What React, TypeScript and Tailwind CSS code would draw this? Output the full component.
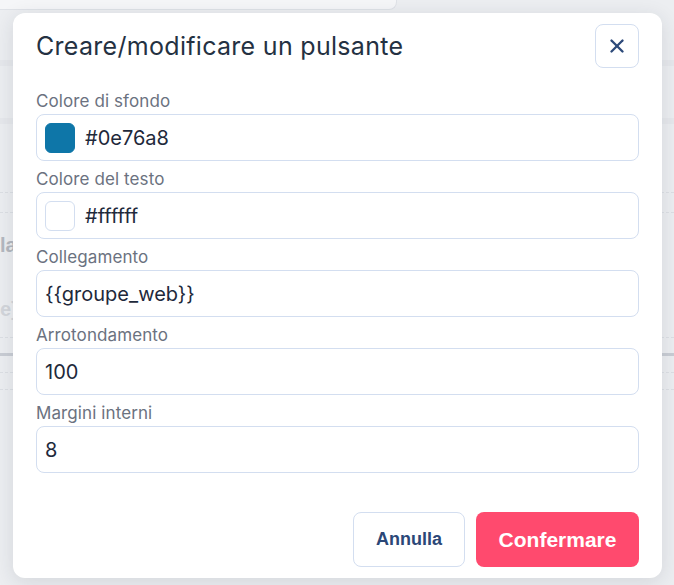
import { X } from "lucide-react";

const fields = [
  { label: "Colore di sfondo", value: "#0e76a8", swatch: "bg-[#0e76a8] border-[#0e76a8]" },
  { label: "Colore del testo", value: "#ffffff", swatch: "bg-white border-[#d3def0]" },
  { label: "Collegamento", value: "{{groupe_web}}" },
  { label: "Arrotondamento", value: "100" },
  { label: "Margini interni", value: "8" },
];

function Backdrop() {
  return (
    <div className="absolute inset-0 bg-[#eceef1]">
      {/* page behind the modal, faded out */}
      <div className="h-[10px] w-[397px] rounded-br-lg border-r border-b border-[#dfe2e7] bg-[#f5f6f8]" />
      <div className="mt-[50px] h-[6px] w-full bg-[#e6e8ec]" />
      <div className="mt-[52px] h-[6px] w-full bg-[#e6e8ec]" />
      <div className="mt-[68px] border-t border-dashed border-[#dcdfe4]" />
      <div className="mt-[19px] border-t border-dashed border-[#dcdfe4]" />
      <div className="mt-[22px] text-[20px] font-bold leading-[20px] text-[#b4b8bf] [font-family:'Liberation_Sans',sans-serif]">
        la
      </div>
      <div className="mt-[44px] text-[20px] font-bold leading-[20px] text-[#d3d6db] [font-family:'Liberation_Sans',sans-serif]">
        {"e}}"}
      </div>
      <div className="mt-[18px] border-t border-dashed border-[#dcdfe4]" />
      <div className="mt-[15px] h-[3px] w-full bg-[#c9cdd4]" />
      <div className="mt-[16px] border-t border-dashed border-[#dcdfe4]" />
      <div className="mt-[16px] border-t border-dashed border-[#dcdfe4]" />
    </div>
  );
}

export default function App() {
  return (
    <div className="relative h-[585px] w-[674px] overflow-hidden [font-family:Inter,'Noto_Sans',sans-serif]">
      <Backdrop />

      <div className="absolute left-[13px] top-[13px] flex h-[565px] w-[649px] flex-col rounded-xl bg-white px-[23px] pt-[11px] pb-[11px] shadow-[0_4px_20px_rgba(30,41,59,0.12)]">
        {/* header */}
        <div className="flex items-center justify-between">
          <h2 className="text-[25px] font-normal leading-[30px] tracking-[0.3px] text-[#243142]">
            Creare/modificare un pulsante
          </h2>
          <button className="flex h-[44px] w-[44px] items-center justify-center rounded-lg border border-[#d3def0] bg-white text-[#2d4a7a]">
            <X size={22} strokeWidth={2.6} />
          </button>
        </div>

        {/* fields */}
        <div className="mt-[22px] flex flex-col gap-[7px]">
          {fields.map((f) => (
            <div key={f.label} className="flex flex-col gap-[2px]">
              <label className="text-[17px] leading-[22px] tracking-[0.1px] text-[#6b7280]">{f.label}</label>
              <div className="flex h-[47px] items-center gap-[10px] rounded-lg border border-[#d3def0] bg-white px-[8px]">
                {f.swatch && (
                  <span className={`h-[30px] w-[30px] rounded-md border ${f.swatch}`} />
                )}
                <span className="text-[20px] text-[#1e293b]">{f.value}</span>
              </div>
            </div>
          ))}
        </div>

        {/* footer */}
        <div className="mt-auto flex justify-end gap-[11px] [font-family:'Liberation_Sans',Arial,sans-serif]">
          <button className="h-[55px] w-[112px] rounded-lg border border-[#d3def0] bg-white text-[18px] font-bold text-[#2b4777]">
            Annulla
          </button>
          <button className="h-[55px] w-[163px] rounded-lg bg-[#ff4a6e] text-[21px] font-bold text-white">
            Confermare
          </button>
        </div>
      </div>
    </div>
  );
}
